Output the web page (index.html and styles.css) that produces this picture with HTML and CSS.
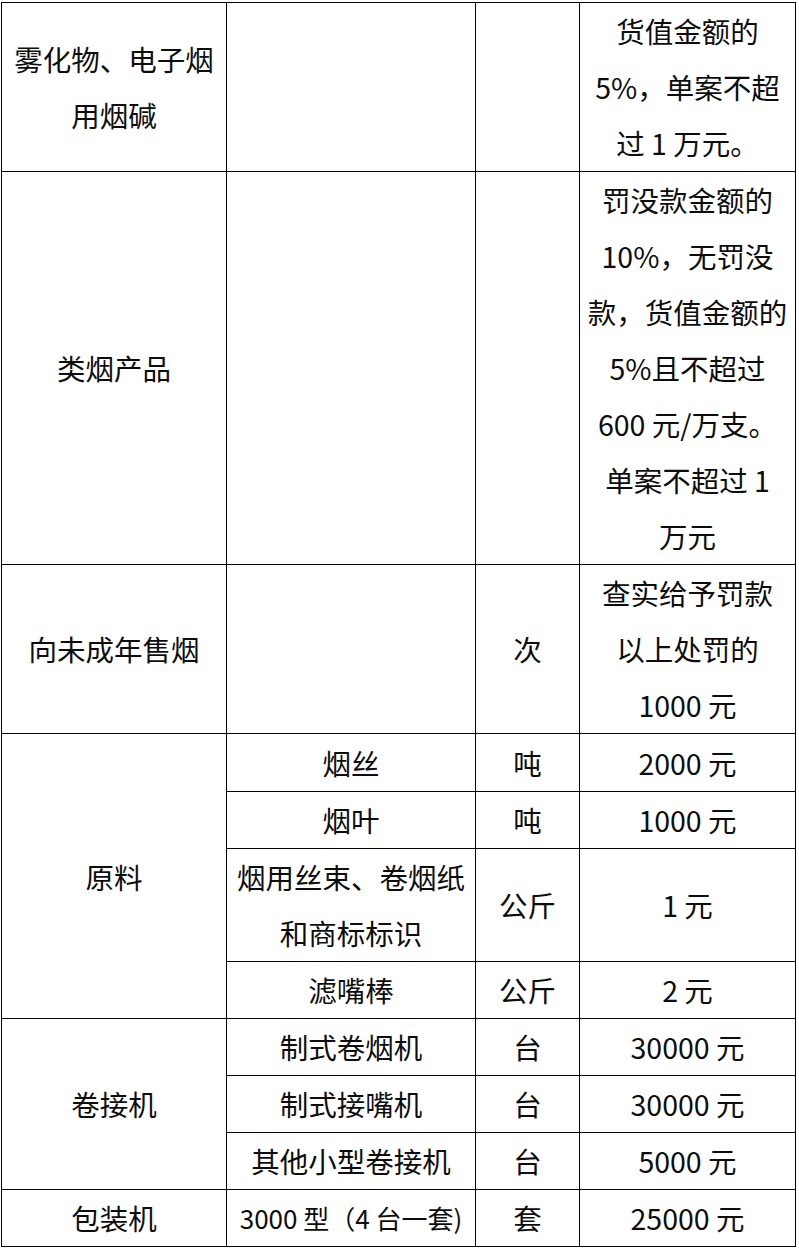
FILE: index.html
```html
<!DOCTYPE html>
<html lang="zh-CN">
<head>
<meta charset="utf-8">
<title>罚款标准</title>
<link rel="stylesheet" href="styles.css">
</head>
<body>
<table class="fee-table">
  <colgroup>
    <col class="c1"><col class="c2"><col class="c3"><col class="c4">
  </colgroup>
  <tbody>
    <tr>
      <td>雾化物、电子烟<br>用烟碱</td>
      <td></td>
      <td></td>
      <td>货值金额的<br>5%，单案不超<br>过 1 万元。</td>
    </tr>
    <tr>
      <td>类烟产品</td>
      <td></td>
      <td></td>
      <td>罚没款金额的<br>10%，无罚没<br>款，货值金额的<br>5%且不超过<br>600 元/万支。<br>单案不超过 1<br>万元</td>
    </tr>
    <tr>
      <td>向未成年售烟</td>
      <td></td>
      <td>次</td>
      <td>查实给予罚款<br>以上处罚的<br>1000 元</td>
    </tr>
    <tr class="r-first">
      <td rowspan="4">原料</td>
      <td>烟丝</td>
      <td>吨</td>
      <td>2000 元</td>
    </tr>
    <tr>
      <td>烟叶</td>
      <td>吨</td>
      <td>1000 元</td>
    </tr>
    <tr>
      <td>烟用丝束、卷烟纸<br>和商标标识</td>
      <td>公斤</td>
      <td>1 元</td>
    </tr>
    <tr>
      <td>滤嘴棒</td>
      <td>公斤</td>
      <td>2 元</td>
    </tr>
    <tr>
      <td rowspan="3">卷接机</td>
      <td>制式卷烟机</td>
      <td>台</td>
      <td>30000 元</td>
    </tr>
    <tr>
      <td>制式接嘴机</td>
      <td>台</td>
      <td>30000 元</td>
    </tr>
    <tr>
      <td>其他小型卷接机</td>
      <td>台</td>
      <td>5000 元</td>
    </tr>
    <tr>
      <td>包装机</td>
      <td class="small">3000 型（4 台一套)</td>
      <td>套</td>
      <td>25000 元</td>
    </tr>
  </tbody>
</table>
</body>
</html>
```

FILE: styles.css
```css
html, body {
  margin: 0;
  padding: 0;
  background: #ffffff;
}

body {
  font-family: "Noto Sans CJK SC", "Microsoft YaHei", "Noto Sans", sans-serif;
  color: #0d0d0d;
}

.fee-table {
  margin: 2px 0 0 1px;
  border-collapse: collapse;
  table-layout: fixed;
  width: 794px;
}

.c1 { width: 225px; }
.c2 { width: 249px; }
.c3 { width: 104px; }
.c4 { width: 216px; }

.fee-table td {
  border: 1px solid #000000;
  padding: 0;
  text-align: center;
  vertical-align: middle;
  font-size: 28.5px;
  line-height: 56px;
  white-space: nowrap;
  overflow: hidden;
}

.fee-table tr.r-first td {
  line-height: 57px;
}

.fee-table td.small {
  font-size: 26px;
}
```
